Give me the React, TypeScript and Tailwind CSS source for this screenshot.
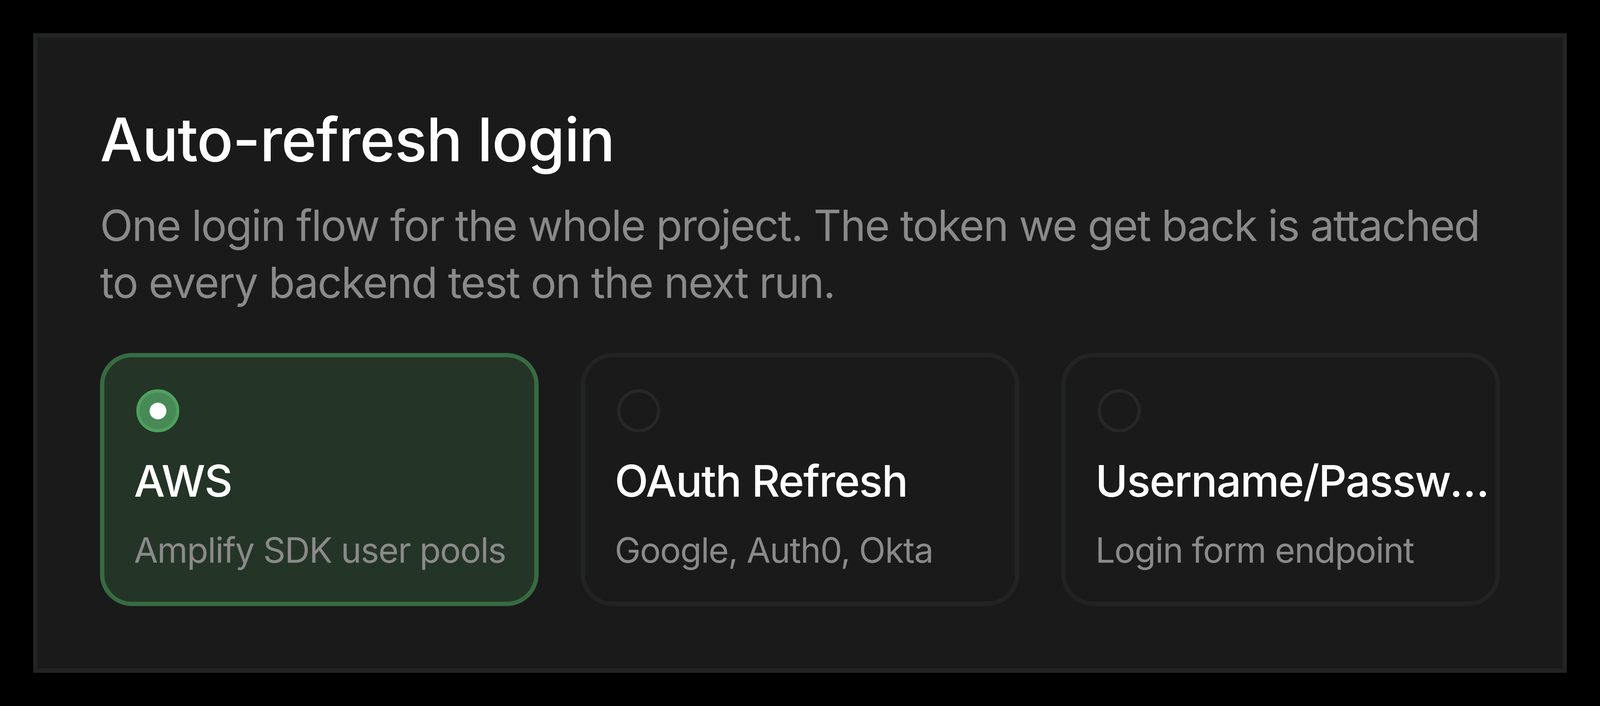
const options = [
  { id: 'aws', title: 'AWS', subtitle: 'Amplify SDK user pools' },
  { id: 'oauth', title: 'OAuth Refresh', subtitle: 'Google, Auth0, Okta' },
  { id: 'password', title: 'Username/Password', subtitle: 'Login form endpoint' },
];

function Radio({ checked }: { checked: boolean }) {
  if (checked) {
    return (
      <div className="ml-[6px] flex h-[110px] w-[110px] items-center justify-center rounded-full border-[8px] border-[#4fa05f] bg-[#478a55]">
        <div className="h-[43px] w-[43px] rounded-full bg-white" />
      </div>
    );
  }
  return <div className="ml-[6px] h-[110px] w-[110px] rounded-full border-[8px] border-[#262827]" />;
}

export default function App() {
  const selected = 'aws';

  return (
    <div className="h-screen w-full overflow-hidden bg-black p-[85px] font-['Inter',sans-serif]">
      <div className="w-full border-[11px] border-[#222423] bg-[#1a1a1a] px-[160px] pt-[169px] pb-[160px]">
        <h1 className="text-[154px] font-medium leading-[185px] tracking-[-0.01em] text-white">Auto-refresh login</h1>
        <p className="mt-[54px] text-[110px] leading-[146px] tracking-[-0.022em] text-[#8a8a8a]">
          One login flow for the whole project. The token we get back is attached to every backend test on the next
          run.
        </p>
        <div className="mt-[108px] grid grid-cols-3 gap-[108px]">
          {options.map((o) => {
            const active = o.id === selected;
            return (
              <div
                key={o.id}
                className={`min-w-0 rounded-[82px] border-[11px] pt-[82px] pr-[4px] pb-[74px] pl-[76px] ${
                  active ? 'border-[#376b42] bg-[#243527]' : 'border-[#222423] bg-[#1a1a1a]'
                }`}
              >
                <Radio checked={active} />
                <div className="mt-[57px] truncate text-[112px] font-medium leading-[134px] tracking-[-0.02em] text-white">
                  {o.title}
                </div>
                <div className="mt-[53px] whitespace-nowrap text-[89px] leading-[116px] tracking-[-0.02em] text-[#8a8a8a]">
                  {o.subtitle}
                </div>
              </div>
            );
          })}
        </div>
      </div>
    </div>
  );
}
